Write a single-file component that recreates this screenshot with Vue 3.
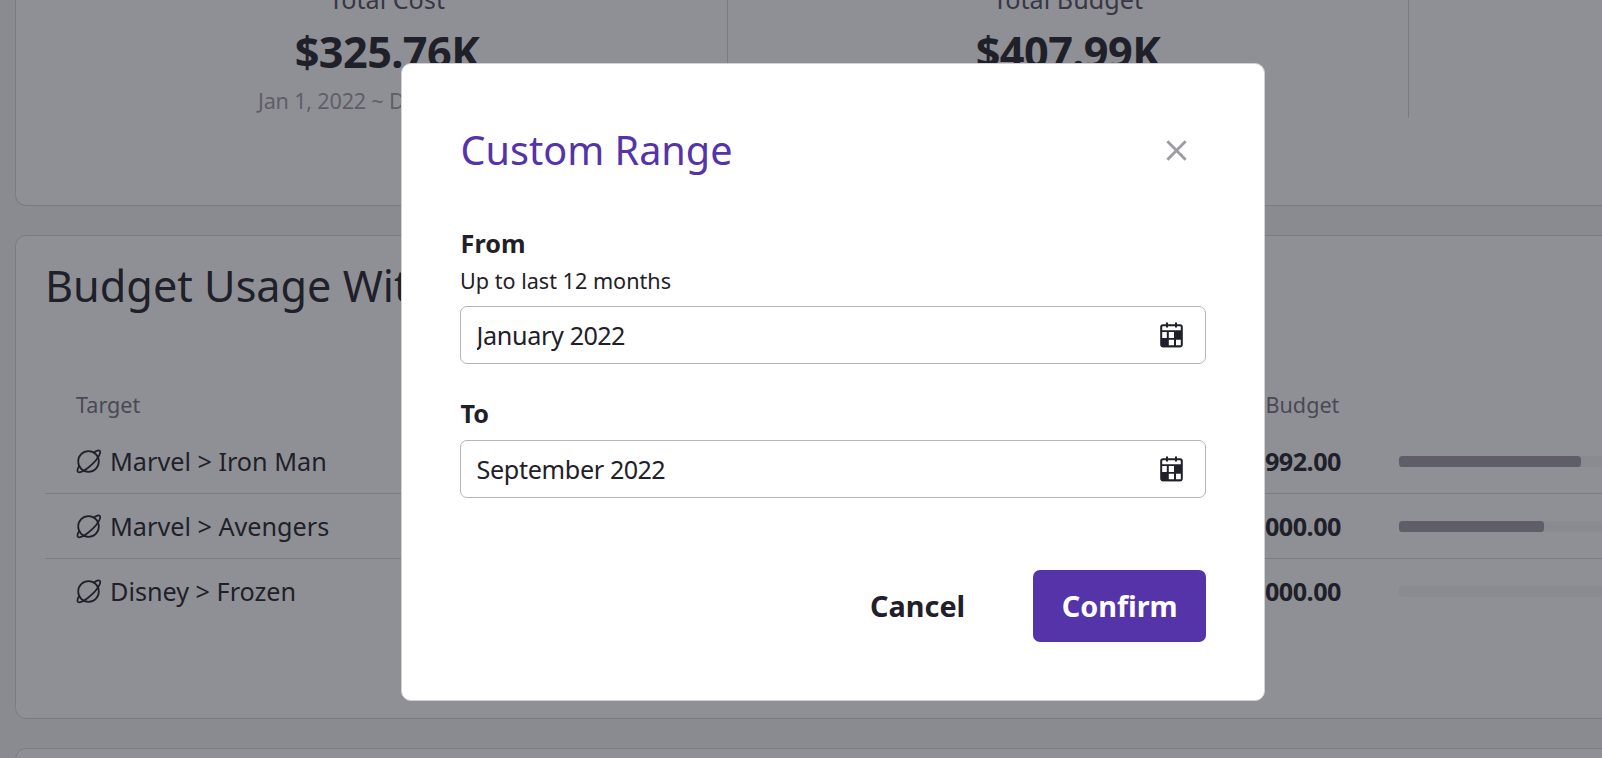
<script setup>
const metrics = [
  { label: 'Total Cost', value: '$325.76K', period: 'Jan 1, 2022 ~ Dec 31, 2022' },
  { label: 'Total Budget', value: '$407.99K', period: 'Jan 1, 2022 ~ Dec 31, 2022' },
  { label: '', value: '', period: '' },
]

const rows = [
  { target: 'Marvel > Iron Man', budget: '$230,992.00', used: 182 },
  { target: 'Marvel > Avengers', budget: '$100,000.00', used: 145 },
  { target: 'Disney > Frozen', budget: '$50,000.00', used: 0 },
]

const fields = [
  { label: 'From', help: 'Up to last 12 months', month: 'January', year: '2022' },
  { label: 'To', help: '', month: 'September', year: '2022' },
]
</script>

<template>
  <div class="page">
    <main class="dashboard">
      <section class="card summary">
        <div v-for="(m, i) in metrics" :key="i" class="metric">
          <div class="metric-label">{{ m.label }}</div>
          <div class="metric-value">{{ m.value }}</div>
          <div class="metric-period">{{ m.period }}</div>
        </div>
      </section>

      <section class="card usage">
        <h2>Budget Usage With Cost</h2>
        <div class="row head">
          <div class="target">Target</div>
          <div class="budget">Budget</div>
        </div>
        <div v-for="row in rows" :key="row.target" class="row">
          <div class="target">
            <svg class="planet" viewBox="0 0 24 24">
              <circle cx="12" cy="12" r="9.9" />
              <path d="M17.2 3.4C19.7 1.5 21.9.8 22.8 1.7c1.7 1.8-1.7 7.6-7.2 12.9-5.5 5.4-11.9 9-13.7 7.3-1-1-.4-3.3 1.4-6.2" />
            </svg>
            <span>{{ row.target }}</span>
          </div>
          <div class="budget">{{ row.budget }}</div>
          <div class="track">
            <div class="bar" :style="{ width: row.used + 'px' }"></div>
          </div>
        </div>
      </section>

      <section class="card next"></section>
    </main>

    <div class="overlay">
      <div class="modal" role="dialog">
        <header>
          <h1>Custom Range</h1>
          <button class="close" aria-label="Close">
            <svg viewBox="0 0 20 20"><path d="M1.3 1.3 18.7 18.7M18.7 1.3 1.3 18.7" /></svg>
          </button>
        </header>

        <div v-for="f in fields" :key="f.label" class="field">
          <label>{{ f.label }}</label>
          <p v-if="f.help">{{ f.help }}</p>
          <div class="input">
            <span class="value">{{ f.month + ' ' }}<span class="year">{{ f.year }}</span></span>
            <svg class="calendar" viewBox="0 0 23 26">
              <rect x="1.2" y="3.3" width="20.6" height="21" rx="1.8" class="frame" />
              <path d="M7 .5v5M16 .5v5" class="frame" />
              <path d="M1 8.300h21v15.500a1.500 1.500 0 0 1-1.500 1.500h-18a1.500 1.500 0 0 1-1.500-1.500z" />
              <path class="cell" d="M2.200 10h4.600v6H2.200zM8.800 10h5.200v6H8.800zM8.800 17.700h5.200v5.600H8.800zM16 17.700h4.800v5.600H16z" />
            </svg>
          </div>
        </div>

        <footer>
          <button class="cancel">Cancel</button>
          <button class="confirm">Confirm</button>
        </footer>
      </div>
    </div>
  </div>
</template>

<style>
body {
  margin: 0;
  overflow: hidden;
}
</style>

<style scoped>
* {
  box-sizing: border-box;
}
.page {
  position: relative;
  width: 1602px;
  height: 758px;
  overflow: hidden;
  background: #8a8b90;
  color: #1f202a;
  font-family: "Noto Sans", sans-serif;
  font-size: 25.2px;
}
.dashboard {
  display: flex;
  flex-direction: column;
  gap: 29px;
  width: 2120px;
  padding-left: 15px;
}
.card {
  flex: none;
  border: 1px solid #7b7c82;
  border-radius: 11px;
  background: #8f9095;
}
.summary {
  display: flex;
  align-items: flex-start;
  height: 206px;
  border-top: 0;
  border-top-left-radius: 0;
  padding: 0 31px;
}
.metric {
  flex: none;
  width: 681px;
  height: 117.6px;
  overflow: hidden;
  border-right: 1px solid #7b7c82;
  text-align: center;
  white-space: nowrap;
}
.metric-label {
  height: 36px;
  margin-top: -18.8px;
  line-height: 36px;
  color: #383845;
}
.metric-value {
  height: 60px;
  margin: 5px 0 1.4px;
  line-height: 60px;
  font-size: 43.2px;
  font-weight: 700;
  letter-spacing: -0.55px;
}
.metric-period {
  height: 34px;
  line-height: 34px;
  font-size: 21.6px;
  letter-spacing: -0.2px;
  color: #5f5e68;
}
.usage {
  height: 484px;
  padding: 20px 29px 0;
}
h2 {
  height: 60px;
  margin: 0 0 64px;
  line-height: 60px;
  font-size: 43.2px;
  font-weight: 400;
}
.row {
  display: flex;
  align-items: center;
  height: 65px;
  padding-left: 31px;
  border-bottom: 1px solid #7b7c82;
}
.row:last-child {
  border-bottom-color: transparent;
}
.row.head {
  height: 48px;
  margin-bottom: 1px;
  border: 0;
  font-size: 21.6px;
  color: #494955;
}
.target {
  display: flex;
  align-items: center;
  gap: 9px;
  width: 900px;
}
.planet {
  width: 25px;
  height: 25px;
  fill: none;
  stroke: #1f202a;
  stroke-width: 1.7;
}
.budget {
  width: 365px;
  text-align: right;
  font-weight: 700;
  letter-spacing: -0.5px;
}
.head .budget {
  width: 363.4px;
  font-weight: 400;
  letter-spacing: 0;
}
.track {
  width: 260px;
  height: 11px;
  margin-left: 58px;
  border-radius: 3.6px;
  background: #8a8b90;
}
.bar {
  height: 100%;
  border-radius: 3.6px;
  background: #5f5e68;
}
.next {
  height: 100px;
}
.overlay {
  position: absolute;
  inset: 0;
  display: flex;
  align-items: flex-start;
  padding: 63px 0 0 401px;
}
.modal {
  width: 864px;
  height: 638px;
  padding: 57px 58px 0;
  border: 1px solid #d2d2d6;
  border-radius: 10px;
  background: #fff;
}
header {
  display: flex;
  justify-content: space-between;
  align-items: center;
  height: 58px;
  margin-bottom: 46px;
}
h1 {
  margin: 0;
  padding-left: 0.6px;
  line-height: 58px;
  font-size: 39.6px;
  font-weight: 400;
  color: #5533a8;
}
button {
  padding: 0;
  border: 0;
  background: none;
  color: inherit;
  font: inherit;
}
.close {
  display: flex;
  align-items: center;
  justify-content: center;
  width: 58px;
  height: 58px;
  padding: 1px 1px 0 0;
}
.close svg {
  width: 21px;
  height: 21px;
  fill: none;
  stroke: #9b9ba4;
  stroke-width: 2.7;
}
.field {
  margin-bottom: 31px;
}
label {
  display: block;
  height: 36px;
  padding-left: 0.6px;
  line-height: 36px;
  font-weight: 700;
}
.field p {
  height: 38px;
  margin: 0;
  padding-top: 1px;
  line-height: 38px;
  font-size: 21.6px;
}
.input {
  display: flex;
  align-items: center;
  justify-content: space-between;
  height: 58px;
  margin-top: 9px;
  padding: 0 22.5px 0 15.5px;
  border: 1px solid #b4b5ba;
  border-radius: 7px;
}
.field p + .input {
  margin-top: 7px;
}
.value {
  flex: 1;
  overflow: hidden;
  line-height: 40px;
  letter-spacing: -0.35px;
}
.year {
  letter-spacing: -0.65px;
}
.calendar {
  width: 23px;
  height: 26px;
  fill: #1f202a;
}
.calendar .frame {
  fill: none;
  stroke: #1f202a;
  stroke-width: 2;
}
.calendar .cell {
  fill: #fff;
}
footer {
  display: flex;
  justify-content: flex-end;
  gap: 39px;
  margin-top: 72px;
}
footer button {
  height: 72px;
  padding: 0 28.8px 2px;
  border-radius: 7px;
  font-size: 28.8px;
  font-weight: 700;
}
.confirm {
  width: 173px;
  background: #5533a8;
  color: #fff;
}
</style>
